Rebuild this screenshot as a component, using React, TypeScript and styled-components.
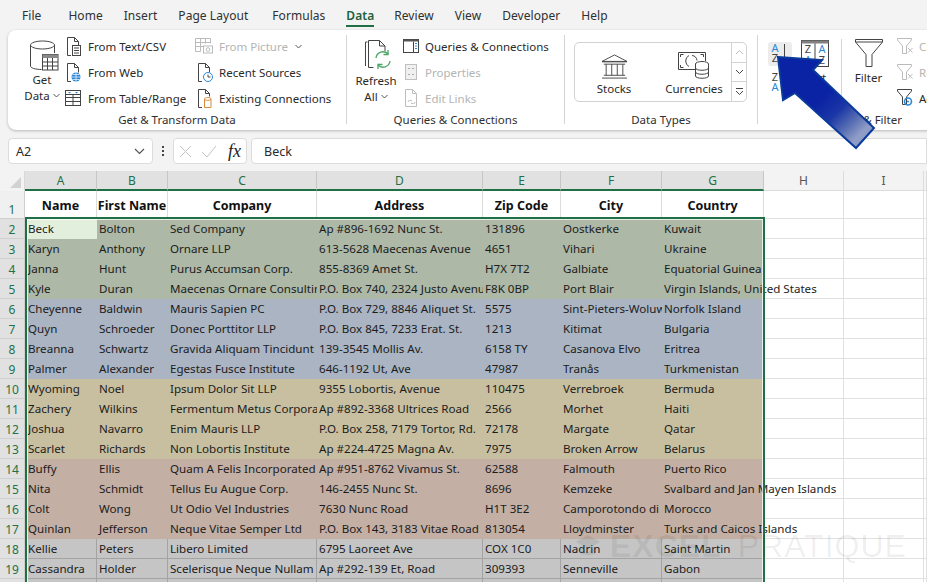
import React from 'react';
import styled, { createGlobalStyle } from 'styled-components';

const Global = createGlobalStyle`
  html, body { margin: 0; padding: 0; height: 100%; overflow: hidden; background: #f3f3f3; }
  #root { width: 927px; height: 582px; overflow: hidden; }
  * { box-sizing: border-box; }
`;

const UI = `"Noto Sans", "Open Sans", sans-serif`;
const GREEN = '#1f7145';

const Page = styled.div`
  position: relative; width: 927px; height: 582px; overflow: hidden;
  background: #f3f3f3; font-family: ${UI}; color: #262626;
`;
const TabBar = styled.div`
  display: flex; height: 30px; padding-left: 22px; gap: 21px; align-items: center;
  font-size: 12px; letter-spacing: 0.05px;
`;
const Tab = styled.div<{ $active?: boolean; $after?: number }>`
  position: relative; height: 30px; line-height: 31px; white-space: nowrap;
  margin-right: ${p => p.$after ?? 0}px;
  font-weight: ${p => (p.$active ? 600 : 400)};
  color: ${p => (p.$active ? '#1d5f3c' : '#303030')};
  &::after {
    content: ''; display: ${p => (p.$active ? 'block' : 'none')};
    position: absolute; left: 0; right: 0; bottom: 3px; height: 2px; background: ${GREEN};
  }
`;
const Ribbon = styled.div`
  display: flex; height: 100px; margin-left: 8px; margin-right: -80px; background: #fff;
  border-radius: 8px 0 0 8px; box-shadow: 0 1px 3px rgba(0,0,0,.25); padding-top: 5px;
  font-size: 11.5px;
`;
const Group = styled.div<{ $w: number; $last?: boolean }>`
  flex: 0 0 ${p => p.$w}px; width: ${p => p.$w}px; height: 89px; display: flex; flex-direction: column;
  border-right: ${p => (p.$last ? 'none' : '1px solid #d4d4d4')};
`;
const GroupBody = styled.div<{ $pad?: number }>`
  flex: 0 0 79px; height: 79px; margin-top: -2px; display: flex; min-height: 0; padding-left: ${p => p.$pad ?? 0}px;
`;
const GroupLabel = styled.div`
  flex: 0 0 16px; height: 16px; line-height: 16px; text-align: center; font-size: 11.5px; color: #303030; white-space: nowrap;
`;
const BigBtn = styled.div<{ $w: number }>`
  flex: 0 0 ${p => p.$w}px; width: ${p => p.$w}px; display: flex; flex-direction: column; align-items: center;
  line-height: 16px; text-align: center; color: #2a2a2a; font-size: 11.5px; white-space: nowrap;
`;
const BigIcon = styled.div<{ $h: number; $x?: number }>`
  height: ${p => p.$h}px; flex: 0 0 ${p => p.$h}px; display: flex; align-items: flex-end; justify-content: center;
  margin-left: ${p => p.$x ?? 0}px;
`;
const BtnLine = styled.div<{ $top?: number }>`
  margin-top: ${p => p.$top ?? 0}px;
`;
const Column = styled.div<{ $w: number; $left?: number }>`
  flex: 0 0 ${p => p.$w}px; width: ${p => p.$w}px; display: flex; flex-direction: column;
  margin-left: ${p => p.$left ?? 0}px;
`;
const SmallBtn = styled.div<{ $off?: boolean }>`
  flex: 0 0 26px; height: 26px; display: flex; align-items: center; gap: 4px; white-space: nowrap;
  color: ${p => (p.$off ? '#b4b4b4' : '#2a2a2a')}; font-size: 11.5px;
`;
const IconSlot = styled.span`
  flex: 0 0 20px; width: 20px; height: 20px; display: flex; align-items: center; justify-content: center;
`;
const Caret = styled.span`
  display: inline-block; width: 7px; height: 7px; margin-left: 3px; vertical-align: 1px;
  svg { display: block; }
`;
const Gallery = styled.div`
  margin: 9px 0 0 9px; width: 173px; height: 60px; border: 1px solid #d2d2d2; border-radius: 5px;
  display: flex; 
`;
const GalleryItem = styled.div<{ $w: number; $inset?: number }>`
  flex: 0 0 ${p => p.$w}px; height: 58px; display: flex; flex-direction: column; align-items: center; justify-content: flex-end;
  padding: 0 0 4px ${p => p.$inset ?? 0}px; font-size: 11.5px; line-height: 16px; color: #2a2a2a;
`;
const GalleryIcon = styled.div`
  height: 28px; display: flex; align-items: flex-end; margin-bottom: 2px;
`;
const GalleryScroll = styled.div`
  margin-left: auto; flex: 0 0 15px; display: flex; flex-direction: column; border-left: 1px solid #d2d2d2;
`;
const ScrollCell = styled.div`
  flex: 1; display: flex; align-items: center; justify-content: center; border-bottom: 1px solid #d2d2d2;
  &:last-child { border-bottom: none; }
`;
const SortStack = styled.div`
  flex: 0 0 33px; display: flex; flex-direction: column; gap: 5px; padding-top: 9px;
`;
const SortTile = styled.div<{ $hot?: boolean }>`
  width: 24px; height: 24px; margin-left: 1px; border-radius: 3px; background: ${p => (p.$hot ? '#ececec' : 'transparent')};
  svg { display: block; }
`;
const InnerDivider = styled.div`
  flex: 0 0 1px; width: 1px; height: 70px; margin: 6px 12px 0 11px; background: #d4d4d4;
`;

const FormulaRow = styled.div`
  display: flex; height: 26px; margin-top: 8px; padding-left: 8px; align-items: stretch; font-size: 12.5px;
`;
const NameBox = styled.div`
  width: 145px; background: #fff; border: 1px solid #dcdcdc; border-radius: 4px;
  display: flex; align-items: center; justify-content: space-between; padding: 0 7px; color: #2a2a2a;
`;
const Dots = styled.div`
  width: 20px; display: flex; flex-direction: column; align-items: center; justify-content: center; gap: 2px;
  span { width: 2px; height: 2px; background: #444; }
`;
const FxBox = styled.div`
  width: 74px; background: #fff; border: 1px solid #dcdcdc; border-radius: 4px; display: flex; align-items: center;
  padding: 0 5px; gap: 9px;
`;
const FxGlyph = styled.span`
  font-family: "Liberation Serif", serif; font-style: italic; font-weight: 400; font-size: 18px; color: #222;
  margin-left: 2px; line-height: 20px;
`;
const FormulaInput = styled.div`
  flex: 1; margin-left: 4px; background: #fff; border: 1px solid #dcdcdc; border-radius: 4px 0 0 4px;
  padding-left: 12px; line-height: 25px; color: #2a2a2a; 
`;

const Sheet = styled.div`
  margin-top: 7px; font-size: 11.6px; color: #1c1c1c; background: #fff;
`;
const COLS = '25px 72px 71px 149px 166px 78px 101px 102px 80px 80px 3px';
const HeadRow = styled.div`
  display: grid; grid-template-columns: ${COLS}; grid-template-rows: minmax(0, 1fr); height: 20px; background: #f5f5f5;
`;
const Corner = styled.div`
  background: #f3f3f3; border-right: 1px solid #d8d8d8; position: relative;
  &::after {
    content: ''; position: absolute; right: 3px; bottom: 3px; border-style: solid; border-width: 0 0 11px 11px;
    border-color: transparent transparent #d2d2d2 transparent;
  }
`;
const ColHead = styled.div<{ $sel?: boolean }>`
  text-align: center; line-height: 19px; font-size: 12px;
  background: ${p => (p.$sel ? '#e1e1e1' : '#f3f3f3')};
  color: ${p => (p.$sel ? GREEN : '#555')};
  border-right: 1px solid ${p => (p.$sel ? '#c6c6c6' : '#dcdcdc')};
  border-bottom: ${p => (p.$sel ? `2px solid ${GREEN}` : '1px solid #dcdcdc')};
`;
const Row = styled.div<{ $h: number }>`
  display: grid; grid-template-columns: ${COLS}; grid-template-rows: minmax(0, 1fr); height: ${p => p.$h}px;
`;
const RowHead = styled.div<{ $tall?: boolean }>`
  text-align: center; font-size: 12px; color: ${GREEN}; background: ${p => (p.$tall ? '#f0f0f0' : '#e1e1e1')};
  line-height: ${p => (p.$tall ? '37px' : '21px')};
  border-bottom: 1px solid #cfcfcf; border-right: 1px solid #cfcfcf;
`;
const Cell = styled.div<{ $fill?: string; $grid?: boolean; $spill?: boolean; $active?: boolean }>`
  position: relative; padding-left: 2px; line-height: 20px; white-space: nowrap;
  overflow: ${p => (p.$spill ? 'visible' : 'hidden')};
  z-index: ${p => (p.$spill ? 1 : 0)};
  background: ${p => (p.$active ? '#e3efdd' : p.$fill || '#fff')};
  border-right: ${p => (p.$spill ? 'none' : p.$grid ? '1px solid #a3a3a3' : p.$fill ? 'none' : '1px solid #e0e0e0')};
  border-bottom: ${p => (p.$grid ? '1px solid #a3a3a3' : p.$fill ? 'none' : '1px solid #e0e0e0')};
  &:nth-child(2) { padding-left: 3px; }
`;
const HeadCell = styled.div`
  text-align: center; font-weight: 700; font-size: 12.5px; line-height: 29px; background: #fff; white-space: nowrap;
  overflow: hidden; border-right: 1px solid #dcdcdc; color: #111;
  border-bottom: 1px solid #dcdcdc;
`;
const Selection = styled.div`
  position: absolute; left: 25px; top: 217px; width: 740px; height: 380px; border: 2px solid ${GREEN};
  box-shadow: inset 0 0 0 1px rgba(255,255,255,.75); pointer-events: none; z-index: 3;
`;
const Watermark = styled.div`
  position: absolute; left: 575px; top: 523px; display: flex; align-items: center; gap: 9px;
  font-size: 32px; line-height: 46px; letter-spacing: 1px;
  color: rgba(0,0,0,.065); white-space: nowrap; z-index: 4; font-family: "Liberation Sans", sans-serif;
`;
const WatermarkBold = styled.b` font-weight: 700; color: rgba(0,0,0,.07); margin-right: 7px; `;
const WatermarkLight = styled.span` font-weight: 400; `;
const Arrow = styled.svg`
  position: absolute; left: 770px; top: 50px; z-index: 5; overflow: visible;
`;

const ICO = { stroke: '#444', fill: 'none', strokeWidth: 1 };
const CaretDown = () => (
  <Caret><svg width="7" height="7" viewBox="0 0 7 7"><path d="M.5 2l3 3 3-3" fill="none" stroke="#555" /></svg></Caret>
);

const GetDataIcon = () => (
  <svg width="30" height="32" viewBox="0 0 30 32">
    <path d="M1.5 5v21c0 2 5 3.5 11 3.5 M1.500 5c0-2.200 5.500-4 12-4s12 1.800 12 4c0 2.200-5.500 4-12 4s-12-1.800-12-4z M25.500 5v8" {...ICO} />
    <rect x="13.500" y="14.500" width="15.500" height="15.500" fill="#fff" stroke="#444" />
    <rect x="13.500" y="14.500" width="15.500" height="3.500" fill="#8a8a8a" />
    <path d="M13.500 22h15.500M13.500 26h15.500M18.500 18v12M23.500 18v12" stroke="#444" fill="none" />
  </svg>
);
const TextCsv = () => (
  <svg width="20" height="20" viewBox="0 0 20 20"><path d="M7 19.500H3.500v-18h7l4 4v4" {...ICO} /><path d="M10.500 1.500v4h4" {...ICO} />
    <rect x="8.500" y="9.500" width="8" height="10" fill="#fff" stroke="#444" /><path d="M10 12h5M10 14.500h5M10 17h5" stroke="#444" /></svg>
);
const WebDoc = () => (
  <svg width="20" height="20" viewBox="0 0 20 20"><path d="M7 19.500H3.500v-18h7l4 4v5" {...ICO} /><path d="M10.500 1.500v4h4" {...ICO} />
    <circle cx="12" cy="15" r="4.500" fill="#2b88d8" /><path d="M7.500 15h9M12 10.500v9M8.500 12.500h7M8.500 17.500h7" stroke="#fff" strokeWidth=".7" /></svg>
);
const TableRange = () => (
  <svg width="20" height="20" viewBox="0 0 20 20"><rect x="1.500" y="2.500" width="15" height="15" fill="#fff" stroke="#444" />
    <path d="M1.500 6.500h15M1.500 9.500h15M1.500 13.500h15M9 6.500v11" stroke="#444" fill="none" />
    <path d="M4 4h3l-1.500 1.500zM11 4h3l-1.500 1.500z" fill="#2b88d8" /></svg>
);
const PictureIcon = () => (
  <svg width="20" height="20" viewBox="0 0 20 20"><path d="M.500 15.500v-13h15v5M.500 6.500h15M.500 10.500h8M.500 15.500h5M5.500 2.500v13M10.500 2.500v5" stroke="#bbb" fill="none" />
    <rect x="8.500" y="10" width="9" height="7" fill="#fff" stroke="#bbb" /><circle cx="13" cy="13.500" r="1.800" fill="none" stroke="#bbb" /></svg>
);
const RecentIcon = () => (
  <svg width="20" height="20" viewBox="0 0 20 20"><path d="M7 19.500H3.500v-18h7l4 4v5" {...ICO} /><path d="M10.500 1.500v4h4" {...ICO} />
    <circle cx="13" cy="15" r="4.500" fill="#fff" stroke="#2b88d8" /><path d="M13 12.500V15h2.500" stroke="#444" fill="none" /></svg>
);
const ExistingIcon = () => (
  <svg width="20" height="20" viewBox="0 0 20 20"><path d="M7 19.500H3.500v-18h7l4 4v3" {...ICO} /><path d="M10.500 1.500v4h4" {...ICO} />
    <path d="M9.500 11c0-2 6.500-2 6.500 0v8.500H9.500z" fill="#fff" stroke="#d68a3c" /><path d="M9.500 11.500c1.500 1.200 5 1.200 6.500 0" stroke="#d68a3c" fill="none" /></svg>
);
const RefreshIcon = () => (
  <svg width="30" height="33" viewBox="0 0 30 33">
    <path d="M2.500 2v24M2.500 2h2" {...ICO} /><path d="M5.500 27.500V.500h11l5.500 5.500v5M16.500.500v5.500h5.500M5.500 27.500h5" {...ICO} />
    <path d="M13 18a7 7 0 0 1 12-4" fill="none" stroke="#4aa564" strokeWidth="1.300" /><path d="M25 10v4.500h-4.500" fill="none" stroke="#4aa564" strokeWidth="1.300" />
    <path d="M27 21a7 7 0 0 1-12 4" fill="none" stroke="#4aa564" strokeWidth="1.300" /><path d="M15 29v-4.500h4.500" fill="none" stroke="#4aa564" strokeWidth="1.300" />
  </svg>
);
const QueriesIcon = () => (
  <svg width="20" height="20" viewBox="0 0 20 20"><rect x="2.500" y="3.500" width="15" height="13" fill="#fff" stroke="#444" /><rect x="2.500" y="3.500" width="15" height="2" fill="#555" />
    <path d="M12.500 5.500v11" stroke="#444" /><path d="M14 7.500h2M14 10h2M14 12.500h2" stroke="#2b88d8" /></svg>
);
const PropsIcon = () => (
  <svg width="20" height="20" viewBox="0 0 20 20"><rect x="4.500" y="2.500" width="11" height="15" fill="#f0f0f0" stroke="#c0c0c0" /><path d="M7 6.500h2M11 6.500h2M7 12.500h2M11 12.500h2" stroke="#aaa" /></svg>
);
const EditLinksIcon = () => (
  <svg width="20" height="20" viewBox="0 0 20 20"><path d="M4.500 18.500v-17h7l4 4v13z M11.500 1.500v4h4" fill="none" stroke="#bdbdbd" /><path d="M7 14c0-2 3-2 4-1M14 14c0 2-3 2-4 1" fill="none" stroke="#bdbdbd" /></svg>
);
const StocksIcon = () => (
  <svg width="29" height="25" viewBox="0 0 29 27"><path d="M14.500 1L1 8h27zM1 8.500h27M3 11h23M3 23h23M1 26h27M5.500 11v12M11.500 11v12M17.500 11v12M23.500 11v12" fill="none" stroke="#444" /></svg>
);
const CurrencyIcon = () => (
  <svg width="32" height="27" viewBox="0 0 32 27"><path d="M18 17.500H.500V.500h27V9" {...ICO} /><path d="M2.500 5V2.500h3M25.500 5V2.500h-3M2.500 13v2.500h3" {...ICO} /><path d="M11 3.500a5.500 6 0 0 0 0 11M14 3.500a5.500 6 0 0 1 5 5" {...ICO} />
    <ellipse cx="24" cy="12" rx="6.500" ry="2.500" fill="#fff" stroke="#444" />
    <path d="M17.500 12v12c0 3 13 3 13 0V12M17.500 16c0 3 13 3 13 0M17.500 20c0 3 13 3 13 0" fill="#fff" stroke="#444" /></svg>
);
const AZ = ({ flip }: { flip?: boolean }) => (
  <svg width="24" height="24" viewBox="0 0 24 24">
    <text x="7" y="10" textAnchor="middle" fontSize="11" fontFamily="Noto Sans, sans-serif" fill={flip ? '#444' : '#2b88d8'}>{flip ? 'Z' : 'A'}</text>
    <text x="7" y="20" textAnchor="middle" fontSize="11" fontFamily="Noto Sans, sans-serif" fill={flip ? '#2b88d8' : '#444'}>{flip ? 'A' : 'Z'}</text>
    <path d="M16.500 2v19M14 18.500l2.500 2.500 2.500-2.500" fill="none" stroke="#444" />
  </svg>
);
const SortIcon = () => (
  <svg width="28" height="27" viewBox="0 0 28 27"><rect x=".500" y=".500" width="27" height="26" fill="#fff" stroke="#444" /><rect x=".500" y=".500" width="27" height="3" fill="#808080" /><path d="M14 3.500v23" stroke="#444" />
    <text x="7" y="13" textAnchor="middle" fontSize="11" fontFamily="Noto Sans, sans-serif" fill="#444">Z</text><text x="21" y="13" textAnchor="middle" fontSize="11" fontFamily="Noto Sans, sans-serif" fill="#2b88d8">A</text>
    <text x="7" y="24" textAnchor="middle" fontSize="11" fontFamily="Noto Sans, sans-serif" fill="#2b88d8">A</text><text x="21" y="24" textAnchor="middle" fontSize="11" fontFamily="Noto Sans, sans-serif" fill="#444">Z</text></svg>
);
const FunnelIcon = () => (
  <svg width="28" height="28" viewBox="0 0 28 28"><path d="M.500 .500h27v2.500L17 15.500v12h-6v-12L.500 3z" fill="#fff" stroke="#444" /><path d="M.500 3h27" stroke="#444" /></svg>
);
const MiniFunnel = ({ c }: { c: string }) => (
  <svg width="17" height="16" viewBox="0 0 17 16"><path d="M.500 .500h14v1.500L9.500 8v7.500h-4V8L.500 2z" fill="#fff" stroke={c} /><path d="M11 10l4.500 4.500M15.500 10L11 14.500" stroke={c} /></svg>
);
const AdvFunnel = () => (
  <svg width="17" height="18" viewBox="0 0 17 18"><path d="M.500 .500h14v1.500L9.500 8v7.500h-4V8L.500 2z" fill="#fff" stroke="#444" /><circle cx="11" cy="12.500" r="3.500" fill="none" stroke="#2b88d8" strokeWidth="1.600" /><circle cx="11" cy="12.500" r="1" fill="#2b88d8" /></svg>
);
const WatermarkLogo = () => (
  <svg width="26" height="26" viewBox="0 0 26 26"><path d="M13 2L1 9l12 7 12-7zM5 14v6c3 3 13 3 16 0v-6l-8 5z" fill="rgba(0,0,0,.07)" /></svg>
);

type R = string[];
const GREENF = '#adb8a7', BLUEF = '#aab4c2', TANF = '#c8bfa0', ROSEF = '#c3afa4', GREYF = '#c5c5c5';
const ROWS: { f: string; d: R[] }[] = [
  { f: GREENF, d: [
    ['Beck', 'Bolton', 'Sed Company', 'Ap #896-1692 Nunc St.', '131896', 'Oostkerke', 'Kuwait'],
    ['Karyn', 'Anthony', 'Ornare LLP', '613-5628 Maecenas Avenue', '4651', 'Vihari', 'Ukraine'],
    ['Janna', 'Hunt', 'Purus Accumsan Corp.', '855-8369 Amet St.', 'H7X 7T2', 'Galbiate', 'Equatorial Guinea'],
    ['Kyle', 'Duran', 'Maecenas Ornare Consulting', 'P.O. Box 740, 2324 Justo Avenue', 'F8K 0BP', 'Port Blair', 'Virgin Islands, United States'],
  ] },
  { f: BLUEF, d: [
    ['Cheyenne', 'Baldwin', 'Mauris Sapien PC', 'P.O. Box 729, 8846 Aliquet St.', '5575', 'Sint-Pieters-Woluwe', 'Norfolk Island'],
    ['Quyn', 'Schroeder', 'Donec Porttitor LLP', 'P.O. Box 845, 7233 Erat. St.', '1213', 'Kitimat', 'Bulgaria'],
    ['Breanna', 'Schwartz', 'Gravida Aliquam Tincidunt', '139-3545 Mollis Av.', '6158 TY', 'Casanova Elvo', 'Eritrea'],
    ['Palmer', 'Alexander', 'Egestas Fusce Institute', '646-1192 Ut, Ave', '47987', 'Tranås', 'Turkmenistan'],
  ] },
  { f: TANF, d: [
    ['Wyoming', 'Noel', 'Ipsum Dolor Sit LLP', '9355 Lobortis, Avenue', '110475', 'Verrebroek', 'Bermuda'],
    ['Zachery', 'Wilkins', 'Fermentum Metus Corporation', 'Ap #892-3368 Ultrices Road', '2566', 'Morhet', 'Haiti'],
    ['Joshua', 'Navarro', 'Enim Mauris LLP', 'P.O. Box 258, 7179 Tortor, Rd.', '72178', 'Margate', 'Qatar'],
    ['Scarlet', 'Richards', 'Non Lobortis Institute', 'Ap #224-4725 Magna Av.', '7975', 'Broken Arrow', 'Belarus'],
  ] },
  { f: ROSEF, d: [
    ['Buffy', 'Ellis', 'Quam A Felis Incorporated', 'Ap #951-8762 Vivamus St.', '62588', 'Falmouth', 'Puerto Rico'],
    ['Nita', 'Schmidt', 'Tellus Eu Augue Corp.', '146-2455 Nunc St.', '8696', 'Kemzeke', 'Svalbard and Jan Mayen Islands'],
    ['Colt', 'Wong', 'Ut Odio Vel Industries', '7630 Nunc Road', 'H1T 3E2', 'Camporotondo di Fiastrone', 'Morocco'],
    ['Quinlan', 'Jefferson', 'Neque Vitae Semper Ltd', 'P.O. Box 143, 3183 Vitae Road', '813054', 'Lloydminster', 'Turks and Caicos Islands'],
  ] },
  { f: GREYF, d: [
    ['Kellie', 'Peters', 'Libero Limited', '6795 Laoreet Ave', 'COX 1C0', 'Nadrin', 'Saint Martin'],
    ['Cassandra', 'Holder', 'Scelerisque Neque Nullam', 'Ap #292-139 Et, Road', '309393', 'Senneville', 'Gabon'],
    ['', '', '', '', '', '', ''],
  ] },
];
const SPILL = new Set(['Virgin Islands, United States', 'Svalbard and Jan Mayen Islands', 'Turks and Caicos Islands']);
const LETTERS = ['A', 'B', 'C', 'D', 'E', 'F', 'G', 'H', 'I', ''];
const HEADS = ['Name', 'First Name', 'Company', 'Address', 'Zip Code', 'City', 'Country'];

export default function App() {
  let n = 1;
  return (
    <Page>
      <Global />
      <TabBar>
        <Tab $after={6}>File</Tab>
        <Tab>Home</Tab>
        <Tab>Insert</Tab>
        <Tab $after={3}>Page Layout</Tab>
        <Tab>Formulas</Tab>
        <Tab $active $after={-1}>Data</Tab>
        {['Review', 'View', 'Developer', 'Help'].map(t => <Tab key={t}>{t}</Tab>)}
      </TabBar>
      <Ribbon>
        <Group $w={339}>
          <GroupBody $pad={13}>
            <BigBtn $w={42}><BigIcon $h={39} $x={4}><GetDataIcon /></BigIcon><BtnLine>Get</BtnLine><BtnLine>Data<CaretDown /></BtnLine></BigBtn>
            <Column $w={131} $left={1}>
              <SmallBtn><IconSlot><TextCsv /></IconSlot>From Text/CSV</SmallBtn>
              <SmallBtn><IconSlot><WebDoc /></IconSlot>From Web</SmallBtn>
              <SmallBtn><IconSlot><TableRange /></IconSlot>From Table/Range</SmallBtn>
            </Column>
            <Column $w={140}>
              <SmallBtn $off><IconSlot><PictureIcon /></IconSlot>From Picture<CaretDown /></SmallBtn>
              <SmallBtn><IconSlot><RecentIcon /></IconSlot>Recent Sources</SmallBtn>
              <SmallBtn><IconSlot><ExistingIcon /></IconSlot>Existing Connections</SmallBtn>
            </Column>
          </GroupBody>
          <GroupLabel>Get &amp; Transform Data</GroupLabel>
        </Group>
        <Group $w={218}>
          <GroupBody $pad={4}>
            <BigBtn $w={50}><BigIcon $h={40} $x={4}><RefreshIcon /></BigIcon>Refresh<BtnLine>All<CaretDown /></BtnLine></BigBtn>
            <Column $w={160}>
              <SmallBtn><IconSlot><QueriesIcon /></IconSlot>Queries &amp; Connections</SmallBtn>
              <SmallBtn $off><IconSlot><PropsIcon /></IconSlot>Properties</SmallBtn>
              <SmallBtn $off><IconSlot><EditLinksIcon /></IconSlot>Edit Links</SmallBtn>
            </Column>
          </GroupBody>
          <GroupLabel>Queries &amp; Connections</GroupLabel>
        </Group>
        <Group $w={193}>
          <GroupBody>
            <Gallery>
              <GalleryItem $w={78}><GalleryIcon><StocksIcon /></GalleryIcon>Stocks</GalleryItem>
              <GalleryItem $w={78} $inset={4}><GalleryIcon><CurrencyIcon /></GalleryIcon>Currencies</GalleryItem>
              <GalleryScroll>
                <ScrollCell><svg width="9" height="6"><path d="M1 5l3.500-3.500L8 5" fill="none" stroke="#bbb" /></svg></ScrollCell>
                <ScrollCell><svg width="9" height="6"><path d="M1 1l3.500 3.500L8 1" fill="none" stroke="#444" /></svg></ScrollCell>
                <ScrollCell><svg width="9" height="8"><path d="M1 .5h7M1 3l3.500 3.500L8 3" fill="none" stroke="#444" /></svg></ScrollCell>
              </GalleryScroll>
            </Gallery>
          </GroupBody>
          <GroupLabel>Data Types</GroupLabel>
        </Group>
        <Group $w={224} $last>
          <GroupBody $pad={9}>
            <SortStack>
              <SortTile $hot><AZ /></SortTile>
              <SortTile><AZ flip /></SortTile>
            </SortStack>
            <BigBtn $w={30}><BigIcon $h={34}><SortIcon /></BigIcon><BtnLine $top={3}>Sort</BtnLine></BigBtn>
            <InnerDivider />
            <BigBtn $w={29}><BigIcon $h={34}><FunnelIcon /></BigIcon><BtnLine $top={3}>Filter</BtnLine></BigBtn>
            <Column $w={80} $left={12}>
              <SmallBtn $off><IconSlot><MiniFunnel c="#bbb" /></IconSlot>Clear</SmallBtn>
              <SmallBtn $off><IconSlot><MiniFunnel c="#bbb" /></IconSlot>Reapply</SmallBtn>
              <SmallBtn><IconSlot><AdvFunnel /></IconSlot>Advanced</SmallBtn>
            </Column>
          </GroupBody>
          <GroupLabel>Sort &amp; Filter</GroupLabel>
        </Group>
      </Ribbon>
      <FormulaRow>
        <NameBox>A2<svg width="11" height="7"><path d="M1 1l4.500 4.500L10 1" fill="none" stroke="#555" strokeWidth="1.200" /></svg></NameBox>
        <Dots><span /><span /><span /></Dots>
        <FxBox>
          <svg width="13" height="13"><path d="M1 1l11 11M12 1L1 12" stroke="#c4c4c4" fill="none" /></svg>
          <svg width="16" height="13"><path d="M1 7l5 5L15 1" stroke="#c4c4c4" fill="none" /></svg>
          <FxGlyph>fx</FxGlyph>
        </FxBox>
        <FormulaInput>Beck</FormulaInput>
      </FormulaRow>
      <Sheet>
        <HeadRow>
          <Corner />
          {LETTERS.map((l, i) => <ColHead key={i} $sel={i < 7}>{l}</ColHead>)}
        </HeadRow>
        <Row $h={28}>
          <RowHead $tall>1</RowHead>
          {HEADS.map(h => <HeadCell key={h}>{h}</HeadCell>)}
          <Cell /><Cell /><Cell />
        </Row>
        {ROWS.flatMap(b => b.d.map(r => {
          n += 1;
          const isGrey = b.f === GREYF;
          const isFirst = n === 2;
          return (
            <Row $h={20} key={n}>
              <RowHead>{n}</RowHead>
              {r.map((c, i) => (
                <Cell key={i} $fill={b.f} $grid={isGrey} $spill={SPILL.has(c)} $active={isFirst && i === 0}>{c}</Cell>
              ))}
              <Cell /><Cell /><Cell />
            </Row>
          );
        }))}
      </Sheet>
      <Selection />
      <Watermark><WatermarkLogo /><WatermarkBold>EXCEL</WatermarkBold><WatermarkLight>PRATIQUE</WatermarkLight></Watermark>
      <Arrow width="110" height="100">
        <defs>
          <linearGradient id="arrowFill" x1="0.45" y1="0.45" x2="0.85" y2="0.85">
            <stop offset="0" stopColor="#0a22a4" />
            <stop offset="0.4" stopColor="#1a36a6" />
            <stop offset="0.75" stopColor="#5a70b4" />
            <stop offset="1" stopColor="#8f9cc6" />
          </linearGradient>
        </defs>
        <polygon points="8,7 52,10 43,20 104,78 86,98 25,43 13,50" fill="url(#arrowFill)" stroke="#0a3a9c" strokeWidth="2" />
      </Arrow>
    </Page>
  );
}
